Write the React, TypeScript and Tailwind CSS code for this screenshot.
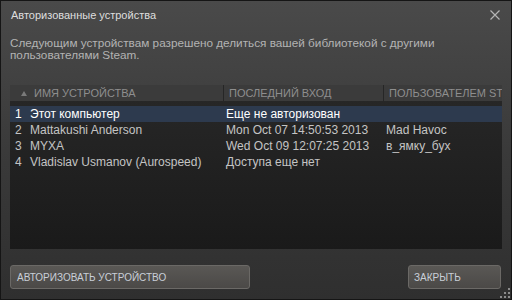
import React from "react";

const rows = [
  { n: 1, name: "Этот компьютер", last: "Еще не авторизован", user: "", active: true },
  { n: 2, name: "Mattakushi Anderson", last: "Mon Oct 07 14:50:53 2013", user: "Mad Havoc" },
  { n: 3, name: "MYXA", last: "Wed Oct 09 12:07:25 2013", user: "в_ямку_бух" },
  { n: 4, name: "Vladislav Usmanov (Aurospeed)", last: "Доступа еще нет", user: "" },
];

const font = { fontFamily: '"Liberation Sans", Arial, sans-serif' };

export default function App() {
  return (
    <div
      className="w-[512px] h-[300px] flex flex-col border border-[#151515] bg-gradient-to-b from-[#4a4a4a] via-[#3a3a3a] to-[#2f2f2f] overflow-hidden relative"
      style={font}
    >
      {/* title bar */}
      <div className="h-[29px] flex items-center justify-between pl-[10px] pr-[11px] shrink-0">
        <span className="text-[11px] text-[#dedede]">Авторизованные устройства</span>
        <svg width="10" height="10" viewBox="0 0 10 10" className="mt-[-1px]">
          <path d="M0.5 0.5 L9.5 9.5 M9.5 0.5 L0.5 9.5" stroke="#b4b4b4" strokeWidth="1.2" />
        </svg>
      </div>

      {/* description */}
      <p className="mt-[7px] px-[9px] text-[11.75px] leading-[12px] text-[#b3b3b3]">
        Следующим устройствам разрешено делиться вашей библиотекой с другими пользователями Steam.
      </p>

      {/* device list */}
      <div className="mt-[24px] ml-[9px] w-[492px] h-[164px] flex flex-col bg-gradient-to-b from-[#282828] to-[#1a1a1a] shrink-0">
        <div className="h-[16px] flex items-center bg-[#3b3b3b] text-[11px] text-[#8e8e8e] uppercase overflow-hidden whitespace-nowrap">
          <div className="w-[213px] flex items-center pl-[11px] shrink-0">
            <svg width="6" height="5" viewBox="0 0 6 5" className="mr-[7px]">
              <path d="M3 0 L6 5 L0 5 Z" fill="#7a7a7a" />
            </svg>
            <span>Имя устройства</span>
          </div>
          <div className="w-[1px] h-[16px] bg-[#262626] shrink-0" />
          <div className="w-[159px] pl-[5px] shrink-0">Последний вход</div>
          <div className="w-[1px] h-[16px] bg-[#262626] shrink-0" />
          <div className="pl-[5px] shrink-0">Пользователем Steam</div>
        </div>
        <div className="mt-[5px] flex flex-col">
          {rows.map((r) => (
            <div
              key={r.n}
              className={`h-[16px] flex items-center text-[12px] whitespace-nowrap ${
                r.active ? "bg-[#2d3a4e] text-white" : "text-[#c4c4c4]"
              }`}
            >
              <span className="w-[20px] pl-[5px] shrink-0">{r.n}</span>
              <span className="w-[196px] shrink-0">{r.name}</span>
              <span className="w-[160px] shrink-0">{r.last}</span>
              <span className="shrink-0">{r.user}</span>
            </div>
          ))}
        </div>
      </div>

      {/* buttons */}
      <div className="mt-[16px] px-[9px] flex justify-between">
        <button className="w-[240px] h-[24px] rounded-[3px] border border-[#6b6966] bg-gradient-to-b from-[#5a5855] to-[#4b4947] text-left pl-[6px] text-[10px] text-[#c9cfd8] uppercase">
          Авторизовать устройство
        </button>
        <button className="w-[93px] h-[24px] mr-[1px] rounded-[3px] border border-[#6b6966] bg-gradient-to-b from-[#5a5855] to-[#4b4947] text-left pl-[5px] text-[10px] text-[#c9cfd8] uppercase">
          Закрыть
        </button>
      </div>

      {/* resize grip */}
      <svg width="10" height="10" viewBox="0 0 10 10" className="absolute right-[1px] bottom-[1px]">
        <rect x="8" y="0" width="2" height="2" fill="#8a8a8a" />
        <rect x="4" y="4" width="2" height="2" fill="#8a8a8a" />
        <rect x="8" y="4" width="2" height="2" fill="#8a8a8a" />
        <rect x="0" y="8" width="2" height="2" fill="#8a8a8a" />
        <rect x="4" y="8" width="2" height="2" fill="#8a8a8a" />
        <rect x="8" y="8" width="2" height="2" fill="#8a8a8a" />
      </svg>
    </div>
  );
}
